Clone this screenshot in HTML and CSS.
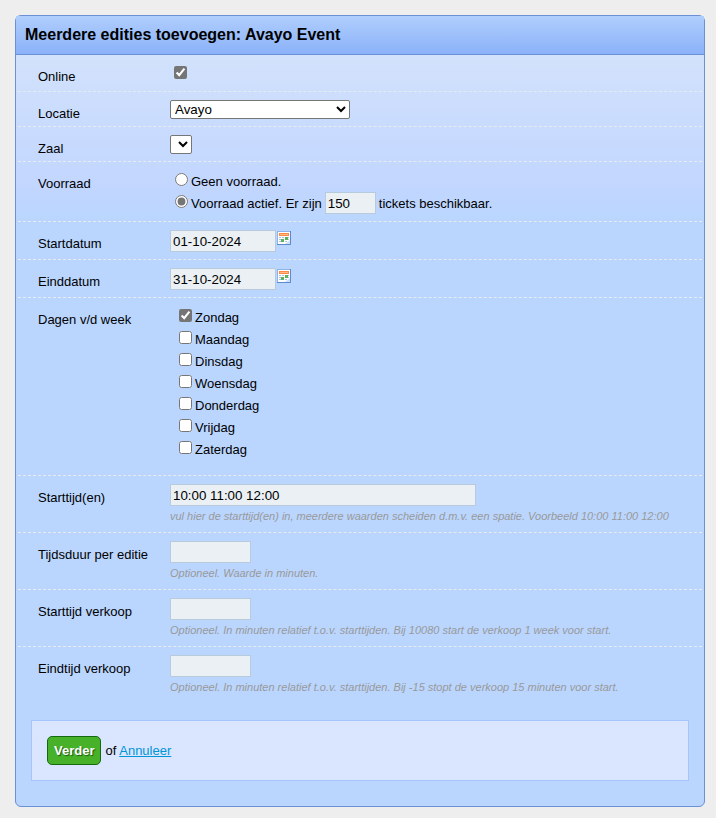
FILE: index.html
```html
<!DOCTYPE html>
<html lang="nl">
<head>
<meta charset="utf-8">
<title>Meerdere edities toevoegen</title>
<link rel="stylesheet" href="styles.css">
</head>
<body>
<svg class="sprite" aria-hidden="true">
  <symbol id="calendar" viewBox="0 0 14 14">
    <rect x="0.5" y="0.5" width="13" height="13" fill="#fff" stroke="#8db4ea"/>
    <path d="M13.5 0v13.5H0" fill="none" stroke="#5a8ad0"/>
    <rect x="2" y="2" width="10" height="3" fill="#ff8a45"/>
    <path d="M3 3.500h8" stroke="#ffb680"/>
    <path d="M2 6h2v1H2zM5 6h2v1H5zM11 6h1v1h-1zM2 8h2v1H2zM11 8h1v1h-1zM2 10h2v1H2zM8 10h2v1H8z" fill="#a9c3ea"/>
    <path d="M8 6h3v3H8zM4 8h3v3H4z" fill="#5db35d"/>
    <path d="M13 9v4H8z" fill="#cfdff5"/>
  </symbol>
</svg>
<form class="panel">
  <h1 class="title">Meerdere edities toevoegen: Avayo Event</h1>
  <div class="fields">
    <div class="row">
      <label class="label" for="online">Online</label>
      <div class="control"><input class="check check-single" type="checkbox" id="online" checked></div>
    </div>
    <div class="row">
      <label class="label" for="locatie">Locatie</label>
      <div class="control"><select class="select select-wide" id="locatie"><option>Avayo</option></select></div>
    </div>
    <div class="row">
      <label class="label" for="zaal">Zaal</label>
      <div class="control"><select class="select" id="zaal"></select></div>
    </div>
    <div class="row" role="radiogroup" aria-labelledby="voorraad">
      <span class="label" id="voorraad">Voorraad</span>
      <div class="control">
        <div class="line"><input class="radio" type="radio" name="voorraad" id="geen"><label for="geen">Geen voorraad.</label></div>
        <div class="line"><input class="radio" type="radio" name="voorraad" id="actief" checked><label for="actief">Voorraad actief. Er zijn</label><input class="text text-count" type="text" value="150" aria-label="Aantal tickets"><span>tickets beschikbaar.</span></div>
      </div>
    </div>
    <div class="row">
      <label class="label" for="startdatum">Startdatum</label>
      <div class="control control-date"><input class="text text-date" type="text" id="startdatum" value="01-10-2024"><button class="picker" type="button" aria-label="Kies startdatum"><svg class="icon"><use href="#calendar"/></svg></button></div>
    </div>
    <div class="row">
      <label class="label" for="einddatum">Einddatum</label>
      <div class="control control-date"><input class="text text-date" type="text" id="einddatum" value="31-10-2024"><button class="picker" type="button" aria-label="Kies einddatum"><svg class="icon"><use href="#calendar"/></svg></button></div>
    </div>
    <div class="row" role="group" aria-labelledby="dagen">
      <span class="label" id="dagen">Dagen v/d week</span>
      <ul class="control days">
        <li class="line"><input class="check" type="checkbox" id="zo" checked><label for="zo">Zondag</label></li>
        <li class="line"><input class="check" type="checkbox" id="ma"><label for="ma">Maandag</label></li>
        <li class="line"><input class="check" type="checkbox" id="di"><label for="di">Dinsdag</label></li>
        <li class="line"><input class="check" type="checkbox" id="wo"><label for="wo">Woensdag</label></li>
        <li class="line"><input class="check" type="checkbox" id="do"><label for="do">Donderdag</label></li>
        <li class="line"><input class="check" type="checkbox" id="vr"><label for="vr">Vrijdag</label></li>
        <li class="line"><input class="check" type="checkbox" id="za"><label for="za">Zaterdag</label></li>
      </ul>
    </div>
    <div class="row">
      <label class="label" for="starttijden">Starttijd(en)</label>
      <div class="control"><input class="text text-wide" type="text" id="starttijden" value="10:00 11:00 12:00"><p class="hint">vul hier de starttijd(en) in, meerdere waarden scheiden d.m.v. een spatie. Voorbeeld 10:00 11:00 12:00</p></div>
    </div>
    <div class="row">
      <label class="label" for="tijdsduur">Tijdsduur per editie</label>
      <div class="control"><input class="text" type="text" id="tijdsduur"><p class="hint">Optioneel. Waarde in minuten.</p></div>
    </div>
    <div class="row">
      <label class="label" for="startverkoop">Starttijd verkoop</label>
      <div class="control"><input class="text" type="text" id="startverkoop"><p class="hint">Optioneel. In minuten relatief t.o.v. starttijden. Bij 10080 start de verkoop 1 week voor start.</p></div>
    </div>
    <div class="row">
      <label class="label" for="eindverkoop">Eindtijd verkoop</label>
      <div class="control"><input class="text" type="text" id="eindverkoop"><p class="hint">Optioneel. In minuten relatief t.o.v. starttijden. Bij -15 stopt de verkoop 15 minuten voor start.</p></div>
    </div>
  </div>
  <div class="actions"><button class="submit" type="submit">Verder</button><span>of <a class="cancel" href="#">Annuleer</a></span></div>
</form>
</body>
</html>
```
FILE: styles.css
```css
* { box-sizing: border-box; }

body {
  margin: 0;
  padding: 15px 11px 11px 15px;
  background: #eee;
  color: #000;
  font: 13px/16px "Liberation Sans", Arial, sans-serif;
}

.sprite { display: none; }

.panel {
  padding-bottom: 25px;
  border: 1px solid #6a91d6;
  border-radius: 6px;
  background: #bad6ff;
}

.title {
  margin: 0;
  padding: 9px;
  border-bottom: 1px solid #6a91d6;
  background: linear-gradient(#b0cefd, #8bb2f9);
  font-size: 16px;
  line-height: 20px;
}

.fields {
  padding: 0 2px;
  background: linear-gradient(#d2e2fc, #c2d6ff 130px, #bad6ff 165px);
}

.row {
  display: flex;
  align-items: flex-start;
  padding: 8px 0 7px 20px;
  border-bottom: 1px dashed #e6ebf2;
}

.row:last-child { border-bottom-color: transparent; }

.label {
  flex: 0 0 132px;
  margin-bottom: -5px;
  padding-top: 6px;
}

.control {
  flex: 1;
  min-width: 0;
  margin: 0;
}

.control-date {
  display: flex;
  align-items: flex-start;
}

.days {
  padding: 0 0 8px 5px;
  list-style: none;
}

.line {
  height: 22px;
  line-height: 22px;
}

.check,
.radio {
  width: 13px;
  height: 13px;
  accent-color: #757575;
}

.check { margin: 3px 3px 3px 4px; }
.radio { margin: 3px 3px 0 5px; }

.check-single {
  display: block;
  margin-bottom: 5px;
}

.select {
  display: block;
  width: 22px;
  height: 19px;
  padding: 0;
  border: 1px solid #767676;
  border-radius: 2px;
  background: #fff;
  color: #000;
  font-family: inherit;
}

.select-wide { width: 180px; }

.text {
  display: block;
  width: 81px;
  height: 22px;
  padding: 1px 2px;
  border: 1px solid #b7cbdd;
  background: #eaf0f4;
  color: #000;
  font-family: inherit;
}

.text-count {
  display: inline-block;
  width: 51px;
  margin: 0 3px;
  vertical-align: top;
}

.text-date { width: 106px; }
.text-wide { width: 306px; }

.picker {
  margin: 1px;
  padding: 0;
  border: 0;
  background: none;
}

.icon {
  display: block;
  width: 14px;
  height: 14px;
}

.hint {
  margin: 0;
  padding-top: 2px;
  color: #999;
  font-size: 11px;
  font-style: italic;
  line-height: 17px;
}

.actions {
  display: flex;
  align-items: center;
  gap: 4px;
  margin: 16px 15px 0;
  padding: 15px;
  border: 1px solid #a6c6fb;
  background: #dae6ff;
}

.submit {
  height: 29px;
  padding: 0 6px;
  border: 1px solid #15690f;
  border-radius: 5px;
  background: #47b229;
  color: #fff;
  font: bold 13px "Liberation Sans", Arial, sans-serif;
  text-shadow: 1px 1px 1px #1d5a10;
}

.cancel { color: #0094d8; }
```
